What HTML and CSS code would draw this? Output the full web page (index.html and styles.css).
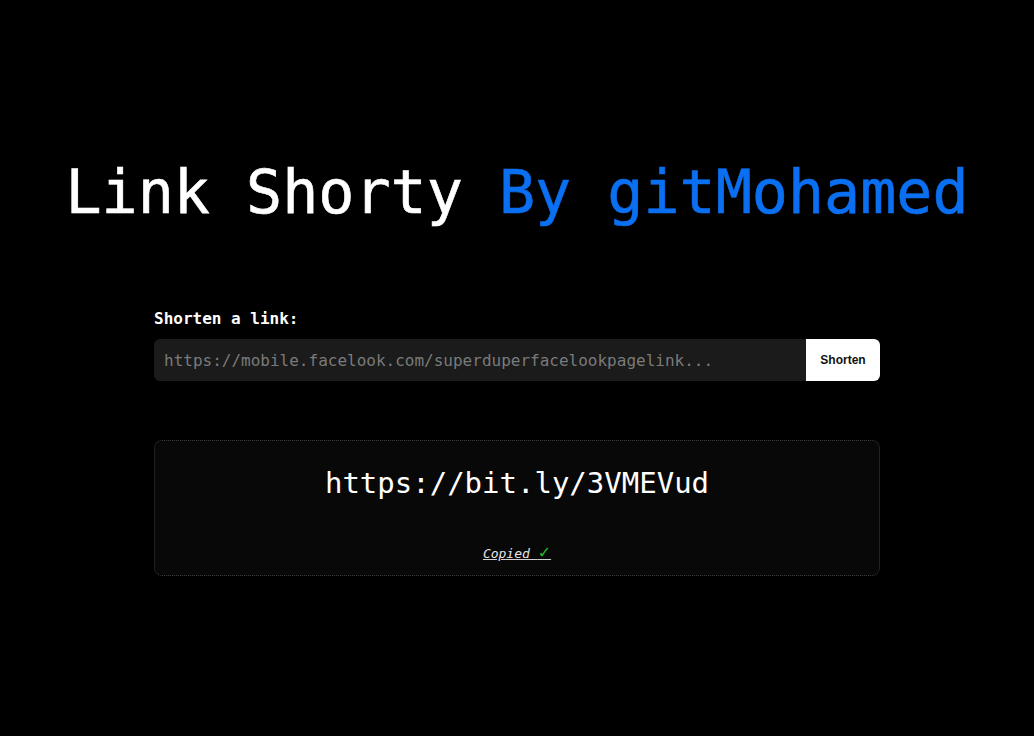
FILE: index.html
```html
<!DOCTYPE html>
<html lang="en">
<head>
<meta charset="utf-8">
<title>Link Shorty</title>
<link rel="stylesheet" href="styles.css">
</head>
<body>
<main class="page">
  <h1 class="title">Link Shorty <span class="accent">By gitMohamed</span></h1>
  <section class="shorten">
    <label class="label" for="url">Shorten a link:</label>
    <div class="field">
      <input id="url" class="input" type="text" placeholder="https://mobile.facelook.com/superduperfacelookpagelink...">
      <button class="button" type="button">Shorten</button>
    </div>
  </section>
  <section class="result">
    <div class="short-link">https://bit.ly/3VMEVud</div>
    <a class="copied" href="#">Copied <span class="check">✓</span></a>
  </section>
</main>
</body>
</html>
```
FILE: styles.css
```css
html, body {
  margin: 0;
  padding: 0;
  background: #000;
  height: 100%;
}
body {
  font-family: "DejaVu Sans Mono", "Liberation Mono", monospace;
  color: #fff;
}
.page {
  display: flex;
  flex-direction: column;
  align-items: center;
}
.title {
  margin: 156px 0 0;
  font-size: 60px;
  line-height: 72px;
  font-weight: normal;
  color: #fff;
  white-space: nowrap;
  -webkit-text-stroke: 0.6px currentColor;
}
.accent {
  color: #0a6ff0;
}
.shorten {
  width: 726px;
  margin-top: 81px;
  display: flex;
  flex-direction: column;
  gap: 10px;
}
.label {
  font-size: 16px;
  line-height: 20px;
  font-weight: bold;
  color: #fff;
}
.field {
  display: flex;
  height: 42px;
}
.input {
  flex: 1;
  min-width: 0;
  border: none;
  outline: none;
  background: #1b1b1b;
  border-radius: 6px 0 0 6px;
  padding: 0 10px;
  font-family: "DejaVu Sans Mono", "Liberation Mono", monospace;
  font-size: 16px;
  color: #ddd;
}
.input::placeholder {
  color: #7a7a7a;
}
.button {
  width: 74px;
  border: none;
  background: #fff;
  color: #111;
  border-radius: 0 6px 6px 0;
  font-family: "Liberation Sans", Arial, sans-serif;
  font-size: 12px;
  font-weight: bold;
  padding: 0;
}
.result {
  box-sizing: border-box;
  width: 726px;
  height: 136px;
  margin-top: 59px;
  border: 1px dotted #3a3a3a;
  border-radius: 8px;
  background: #080808;
  display: flex;
  flex-direction: column;
  align-items: center;
  padding-top: 24px;
}
.short-link {
  font-size: 29px;
  line-height: 36px;
  color: #fff;
}
.copied {
  margin-top: 44px;
  font-size: 13px;
  line-height: 16px;
  font-style: italic;
  color: #e6e6e6;
  text-decoration: underline;
  text-decoration-color: #cfcfcf;
}
.check {
  font-family: "DejaVu Sans", sans-serif;
  font-size: 16px;
  line-height: 16px;
  color: #1fc01f;
  font-style: normal;
}
```
